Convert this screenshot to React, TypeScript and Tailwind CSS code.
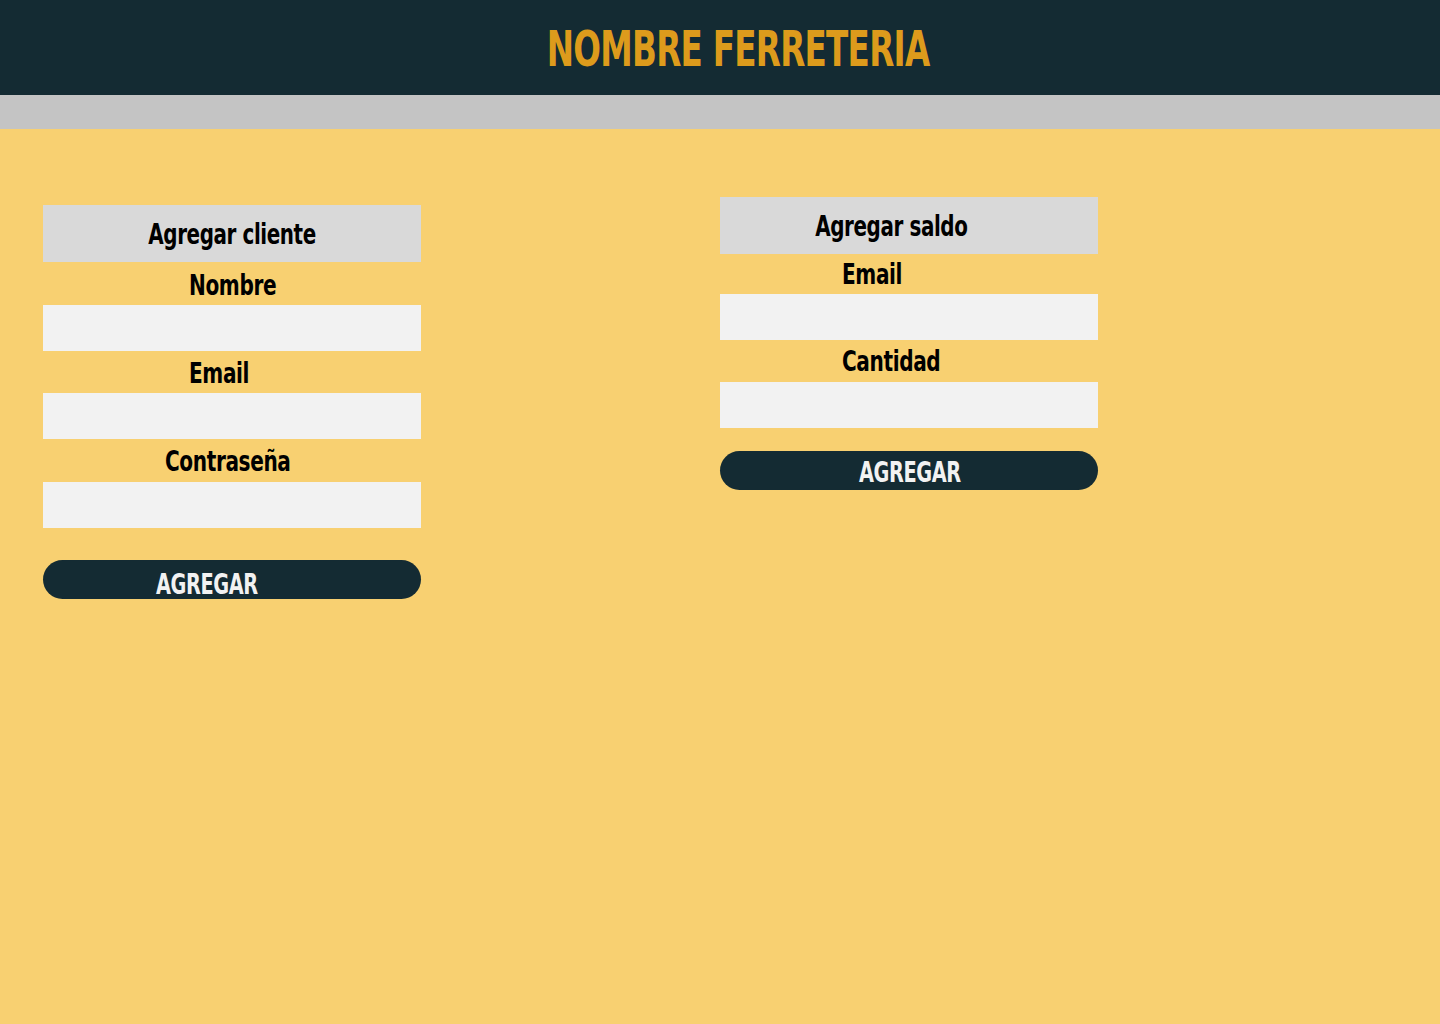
const font = "font-['Liberation_Sans_Narrow','DejaVu_Sans_Condensed',sans-serif] font-bold";

function Field({ label, offset, h = "h-[43px]" }: { label: string; offset: string; h?: string }) {
  return (
    <>
      <div className={`${h} flex items-center ${offset}`}>
        <span className="inline-block origin-left scale-x-[0.77] text-[29px] leading-none tracking-[-0.5px] text-black">
          {label}
        </span>
      </div>
      <div className="h-[46px] bg-[#f2f2f2]" />
    </>
  );
}

export default function App() {
  return (
    <div className={`min-h-[1024px] bg-[#f8d071] ${font}`}>
      <header className="h-[95px] bg-[#142b33] flex items-center justify-center">
        <h1 className="inline-block scale-x-[0.74] text-[49px] leading-none tracking-[-1px] text-[#dd9b1c] pl-[50px] pt-[4px]">
          NOMBRE FERRETERIA
        </h1>
      </header>
      <div className="h-[34px] bg-[#c4c4c4]" />

      <div className="flex pl-[43px] pt-[68px] gap-[299px] items-start">
        {/* Agregar cliente */}
        <section className="w-[378px] mt-[8px] flex flex-col">
          <div className="h-[57px] bg-[#d9d9d9] flex items-center justify-center pt-[2px]">
            <span className="inline-block scale-x-[0.79] text-[28px] tracking-[-0.5px] text-black">Agregar cliente</span>
          </div>
          <Field label="Nombre" offset="pl-[146px] pt-[4px]" />
          <Field label="Email" offset="pl-[146px] pt-[2px]" h="h-[42px]" />
          <Field label="Contraseña" offset="pl-[122px] pt-[2px]" />
          <button className="mt-[32px] h-[39px] rounded-full bg-[#142b33] text-[#f2f2f2] pt-[10px] pr-[50px]">
            <span className="inline-block scale-x-[0.74] text-[29px] tracking-[-0.5px] leading-none">AGREGAR</span>
          </button>
        </section>

        {/* Agregar saldo */}
        <section className="w-[378px] flex flex-col">
          <div className="h-[57px] bg-[#d9d9d9] flex items-center justify-center pr-[36px] pt-[2px]">
            <span className="inline-block scale-x-[0.79] text-[28px] tracking-[-0.5px] text-black">Agregar saldo</span>
          </div>
          <Field label="Email" offset="pl-[122px]" h="h-[40px]" />
          <Field label="Cantidad" offset="pl-[122px]" h="h-[42px]" />
          <button className="mt-[23px] h-[39px] rounded-full bg-[#142b33] text-[#f2f2f2] pt-[6px] pl-[2px]">
            <span className="inline-block scale-x-[0.74] text-[29px] tracking-[-0.5px] leading-none">AGREGAR</span>
          </button>
        </section>
      </div>
    </div>
  );
}
